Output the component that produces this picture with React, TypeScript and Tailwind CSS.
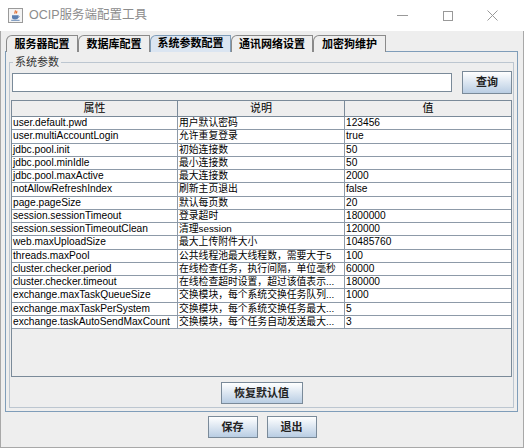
import React from "react";

const ROWS: [string, string, string][] = [
  ["user.default.pwd", "用户默认密码", "123456"],
  ["user.multiAccountLogin", "允许重复登录", "true"],
  ["jdbc.pool.init", "初始连接数", "50"],
  ["jdbc.pool.minIdle", "最小连接数", "50"],
  ["jdbc.pool.maxActive", "最大连接数", "2000"],
  ["notAllowRefreshIndex", "刷新主页退出", "false"],
  ["page.pageSize", "默认每页数", "20"],
  ["session.sessionTimeout", "登录超时", "1800000"],
  ["session.sessionTimeoutClean", "清理session", "120000"],
  ["web.maxUploadSize", "最大上传附件大小", "10485760"],
  ["threads.maxPool", "公共线程池最大线程数，需要大于5", "100"],
  ["cluster.checker.period", "在线检查任务，执行间隔，单位毫秒", "60000"],
  ["cluster.checker.timeout", "在线检查超时设置，超过该值表示...", "180000"],
  ["exchange.maxTaskQueueSize", "交换模块，每个系统交换任务队列...", "1000"],
  ["exchange.maxTaskPerSystem", "交换模块，每个系统交换任务最大...", "5"],
  ["exchange.taskAutoSendMaxCount", "交换模块，每个任务自动发送最大...", "3"],
];

const TABS = [
  { label: "服务器配置", w: "w-[72px]" },
  { label: "数据库配置", w: "w-[72px]" },
  { label: "系统参数配置", w: "w-[81px]", active: true },
  { label: "通讯网络设置", w: "w-[82px]" },
  { label: "加密狗维护", w: "w-[73px]" },
];

function JavaIcon() {
  return (
    <svg width="15" height="15" viewBox="0 0 15 15">
      <rect x="0.5" y="0.5" width="14" height="14" fill="#f4f4f4" stroke="#9a9a9a" />
      <path d="M7 2.5c1.2 1-1 1.8 0.2 3.2M8.6 3c0.8 0.8-0.6 1.4 0.2 2.4" stroke="#e0601a" strokeWidth="1.1" fill="none" />
      <path d="M4 7.2h6.2v2.2c0 1.3-1.2 2-3.1 2s-3.1-0.7-3.1-2z" fill="#5a7fb0" />
      <path d="M10.2 7.8c1.3 0 1.3 1.6 0 1.7" stroke="#5a7fb0" strokeWidth="0.9" fill="none" />
      <path d="M3.2 12.3h8.4" stroke="#5a7fb0" strokeWidth="0.9" />
    </svg>
  );
}

function MetalButton({ label, className }: { label: string; className: string }) {
  return (
    <button
      className={`flex items-center justify-center border border-[#7a8a99] bg-gradient-to-b from-white to-[#b9cde3] text-[11px] font-bold text-[#222] ${className}`}
    >
      {label}
    </button>
  );
}

export default function App() {
  return (
    <div className="flex h-[448px] w-[524px] flex-col overflow-hidden bg-white font-['Liberation_Sans','Noto_Sans_CJK_SC',sans-serif] text-black">
      {/* title bar */}
      <div className="flex h-[31px] items-center bg-white pl-[8px]">
        <JavaIcon />
        <span className="ml-[6px] text-[12.5px] text-[#8c8c8c]">OCIP服务端配置工具</span>
        <div className="ml-auto mr-[9px] flex h-full items-center">
          <div className="flex w-[45px] justify-center">
            <div className="h-px w-[11px] bg-[#999]" />
          </div>
          <div className="flex w-[45px] justify-center">
            <div className="h-[10px] w-[10px] border border-[#999]" />
          </div>
          <div className="flex w-[45px] justify-center">
            <svg width="11" height="11" viewBox="0 0 11 11">
              <path d="M0.5 0.5l10 10M10.5 0.5l-10 10" stroke="#999" strokeWidth="1" />
            </svg>
          </div>
        </div>
      </div>

      {/* body */}
      <div className="flex flex-1 flex-col border-x border-b border-[#a8a8a8] bg-[#eeeeee]">
        {/* tabs */}
        <div className="relative z-10 -mb-px flex pl-[5px] pt-[4px]">
          {TABS.map((t) => (
            <div
              key={t.label}
              className={`flex h-[17px] items-center justify-center rounded-tl-[6px] border border-b-0 text-[11px] font-bold ${t.w} ${
                t.active
                  ? "border-[#7f9db9] bg-[#dbe5f1] pb-px"
                  : "border-[#8a8a8a] bg-[#eeeeee] border-b border-b-[#7f9db9]"
              }`}
            >
              {t.label}
            </div>
          ))}
        </div>

        {/* tab content */}
        <div className="ml-[4px] mr-[5px] flex flex-col border border-[#7f9db9] px-[3px] pb-[3px] pt-[4px]">
          <fieldset className="m-0 flex flex-col border border-[#bcc6d0] px-[1px] pb-[3px] pt-0">
            <legend className="ml-[2px] px-[2px] text-[11px] leading-[12px] text-[#333]">系统参数</legend>
            <div className="mt-[3px] flex h-[23px] items-center">
              <div className="ml-[1px] h-[19px] w-[440px] border border-[#7a8a99] bg-white" />
              <MetalButton label="查询" className="ml-auto mr-0 h-[23px] w-[50px]" />
            </div>

            {/* table */}
            <div className="mt-[6px] flex h-[277px] w-[501px] flex-col border border-[#7a8a99] bg-[#eeeeee]">
              <div className="flex h-[16px] border-b border-[#7a8a99] text-[11px]">
                <div className="flex w-[166px] items-center justify-center border-r border-[#7a8a99]">属性</div>
                <div className="flex w-[167px] items-center justify-center border-r border-[#7a8a99]">说明</div>
                <div className="flex flex-1 items-center justify-center">值</div>
              </div>
              {ROWS.map(([k, d, v]) => (
                <div key={k} className="flex h-[13.25px] border-b border-[#8d9aa8] bg-white text-[10.2px] leading-[12px]">
                  <div className="w-[166px] overflow-hidden whitespace-nowrap border-r border-[#8d9aa8] pl-px">{k}</div>
                  <div className="w-[167px] overflow-hidden whitespace-nowrap border-r border-[#8d9aa8] pl-px text-[9.8px]">{d}</div>
                  <div className="flex-1 overflow-hidden whitespace-nowrap pl-px">{v}</div>
                </div>
              ))}
            </div>

            <div className="mt-[5px] flex justify-center">
              <MetalButton label="恢复默认值" className="h-[22px] w-[82px]" />
            </div>
          </fieldset>
        </div>

        {/* bottom buttons */}
        <div className="mt-[4px] flex justify-center gap-[9px]">
          <MetalButton label="保存" className="h-[22px] w-[50px]" />
          <MetalButton label="退出" className="h-[22px] w-[50px]" />
        </div>
      </div>
    </div>
  );
}
